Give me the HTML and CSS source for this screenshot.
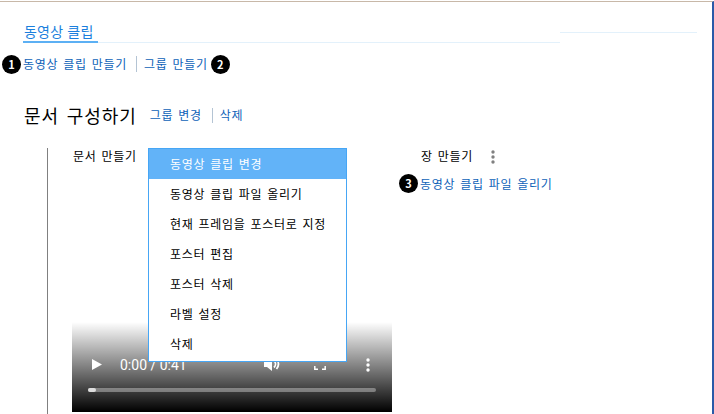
FILE: index.html
```html
<!DOCTYPE html>
<html lang="ko">
<head>
<meta charset="utf-8">
<title>동영상 클립</title>
<link rel="stylesheet" href="styles.css">
</head>
<body>
<div class="page">
  <div class="tabs">
    <a class="tab">동영상 클립</a>
    <div class="tab-line-alt"></div>
  </div>
  <div class="actions">
    <span class="badge">1</span>
    <a class="link first">동영상 클립 만들기</a>
    <span class="sep"></span>
    <a class="link">그룹 만들기</a>
    <span class="badge after">2</span>
  </div>
  <div class="heading">
    <h1 class="title">문서 구성하기</h1>
    <a class="link">그룹 변경</a>
    <span class="sep short"></span>
    <a class="link">삭제</a>
  </div>
  <div class="group">
    <div class="doc">
      <div class="doc-label">문서 만들기</div>
      <div class="video">
        <div class="controls">
          <svg class="play" width="10" height="11" viewBox="0 0 10 11"><path d="M0 0v11l10-5.5z" fill="#fff"/></svg>
          <span class="time">0:00 / 0:41</span>
          <svg class="vol" width="16" height="14" viewBox="0 0 16 14"><path d="M0 4h3l5-4v14l-5-4H0z" fill="#fff"/><path d="M10 3.5c2 2 2 5 0 7M12.5 2c2.4 3 2.4 7 0 10" stroke="#fff" stroke-width="1.8" fill="none"/></svg>
          <svg class="full" width="12" height="12" viewBox="0 0 12 12"><path d="M.8 4V.8H4M8 .8h3.2V4M11.2 8v3.2H8M4 11.2H.8V8" stroke="#fff" stroke-width="1.5" fill="none"/></svg>
          <svg class="more" width="4" height="14" viewBox="0 0 4 14"><circle cx="2" cy="2" r="1.7" fill="#fff"/><circle cx="2" cy="7" r="1.7" fill="#fff"/><circle cx="2" cy="12" r="1.7" fill="#fff"/></svg>
        </div>
        <div class="track"><div class="thumb"></div></div>
      </div>
      <ul class="menu">
        <li class="item active">동영상 클립 변경</li>
        <li class="item">동영상 클립 파일 올리기</li>
        <li class="item">현재 프레임을 포스터로 지정</li>
        <li class="item">포스터 편집</li>
        <li class="item">포스터 삭제</li>
        <li class="item">라벨 설정</li>
        <li class="item">삭제</li>
      </ul>
    </div>
    <div class="chapter">
      <div class="chapter-head">
        <span class="chapter-label">장 만들기</span>
        <svg class="kebab" width="4" height="14" viewBox="0 0 4 14"><circle cx="2" cy="2" r="1.7" fill="#808080"/><circle cx="2" cy="7" r="1.7" fill="#808080"/><circle cx="2" cy="12" r="1.7" fill="#808080"/></svg>
      </div>
      <div class="chapter-action">
        <span class="badge">3</span>
        <a class="link first">동영상 클립 파일 올리기</a>
      </div>
    </div>
  </div>
</div>
</body>
</html>
```
FILE: styles.css
```css
* { box-sizing: border-box; }
html, body { margin: 0; height: 100%; overflow: hidden; background: #fff; }
body { font-family: "Noto Sans CJK KR", "Noto Sans", sans-serif; color: #000; }
.page {
  width: 714px;
  height: 413px;
  margin-top: 1px;
  border-top: 1px solid #c8b8a8;
  border-right: 2px solid #2a5aa8;
  padding: 0 0 0 23px;
  overflow: hidden;
  position: relative;
}
.tabs {
  height: 41px;
  width: 537px;
  border-bottom: 1px solid #e3f1fb;
  display: flex;
  align-items: flex-end;
  position: relative;
}
.tab {
  display: block;
  width: 75px;
  height: 22px;
  font-size: 14px;
  line-height: 20px;
  color: #1b7fdd;
  border-bottom: 2px solid #5cb0f4;
  margin-bottom: -1px;
  padding-left: 1px;
  letter-spacing: 0.2px;
}
.tab-line-alt {
  position: absolute;
  left: 537px;
  top: 30px;
  width: 137px;
  height: 1px;
  background: #e3f1fb;
}
.actions {
  display: flex;
  align-items: center;
  height: 20px;
  margin: 11px 0 0 -21px;
  font-size: 12px;
}
.link {
  color: #0e62b8;
  font-size: 12px;
  line-height: 18px;
  letter-spacing: 0.7px;
  word-spacing: 1px;
}
.link.first { margin-left: 2px; }
.sep {
  width: 1px;
  height: 16px;
  background: #b4c4d4;
  margin: 0 7px 0 9px;
}
.sep.short { height: 15px; margin: 0 7px 0 10px; }
.badge {
  width: 19px;
  height: 19px;
  border-radius: 50%;
  background: #000;
  color: #fff;
  font-size: 11px;
  font-weight: 700;
  line-height: 19px;
  text-align: center;
  flex: none;
}
.badge.after { margin-left: 3px; }
.heading {
  display: flex;
  align-items: center;
  margin-top: 27px;
  height: 28px;
}
.title {
  font-size: 18px;
  font-weight: 400;
  margin: 0 13px 0 1px;
  line-height: 28px;
  letter-spacing: 0.9px;
  word-spacing: 2px;
}
.group {
  margin: 19px 0 0 24px;
  border-left: 1px solid #808080;
  height: 270px;
  display: flex;
  padding-left: 24px;
}
.doc { width: 320px; position: relative; height: 270px; flex: none; }
.doc-label {
  font-size: 12px;
  line-height: 18px;
  margin-top: -1px;
  padding-left: 1px;
  letter-spacing: 0.7px;
  word-spacing: 1px;
}
.video {
  position: absolute;
  left: 0;
  top: 174px;
  width: 320px;
  height: 90px;
  background: linear-gradient(to bottom, rgba(0,0,0,0), #000 100%);
}
.controls { position: absolute; inset: 0; }
.play { position: absolute; left: 20px; top: 37px; }
.time { position: absolute; left: 48px; top: 33px; color: #fff; font: 14px/20px Roboto, sans-serif; }
.vol { position: absolute; left: 192px; top: 35px; }
.full { position: absolute; left: 242px; top: 36px; }
.more { position: absolute; left: 294px; top: 36px; }
.track {
  position: absolute;
  left: 16px;
  top: 66px;
  width: 288px;
  height: 4px;
  border-radius: 2px;
  background: rgba(255,255,255,.35);
}
.thumb { width: 8px; height: 4px; border-radius: 2px; background: #ddd; }
.menu {
  position: absolute;
  left: 76px;
  top: 0;
  width: 199px;
  height: 214px;
  margin: 0;
  padding: 0;
  list-style: none;
  background: #fff;
  border: 1px solid #46a6f5;
}
.item {
  height: 30px;
  line-height: 30px;
  padding-left: 21px;
  font-size: 12px;
  letter-spacing: 0.7px;
  word-spacing: 1px;
  color: #000;
}
.item.active { background: #62b3f8; color: #fff; }
.chapter { position: relative; }
.chapter-head { display: flex; align-items: center; height: 18px; padding-left: 29px; }
.chapter-label {
  font-size: 12px;
  line-height: 18px;
  padding-bottom: 2px;
  letter-spacing: 0.7px;
  word-spacing: 1px;
}
.kebab { margin-left: 18px; }
.chapter-action { display: flex; align-items: center; margin: 8px 0 0 7px; }
```
